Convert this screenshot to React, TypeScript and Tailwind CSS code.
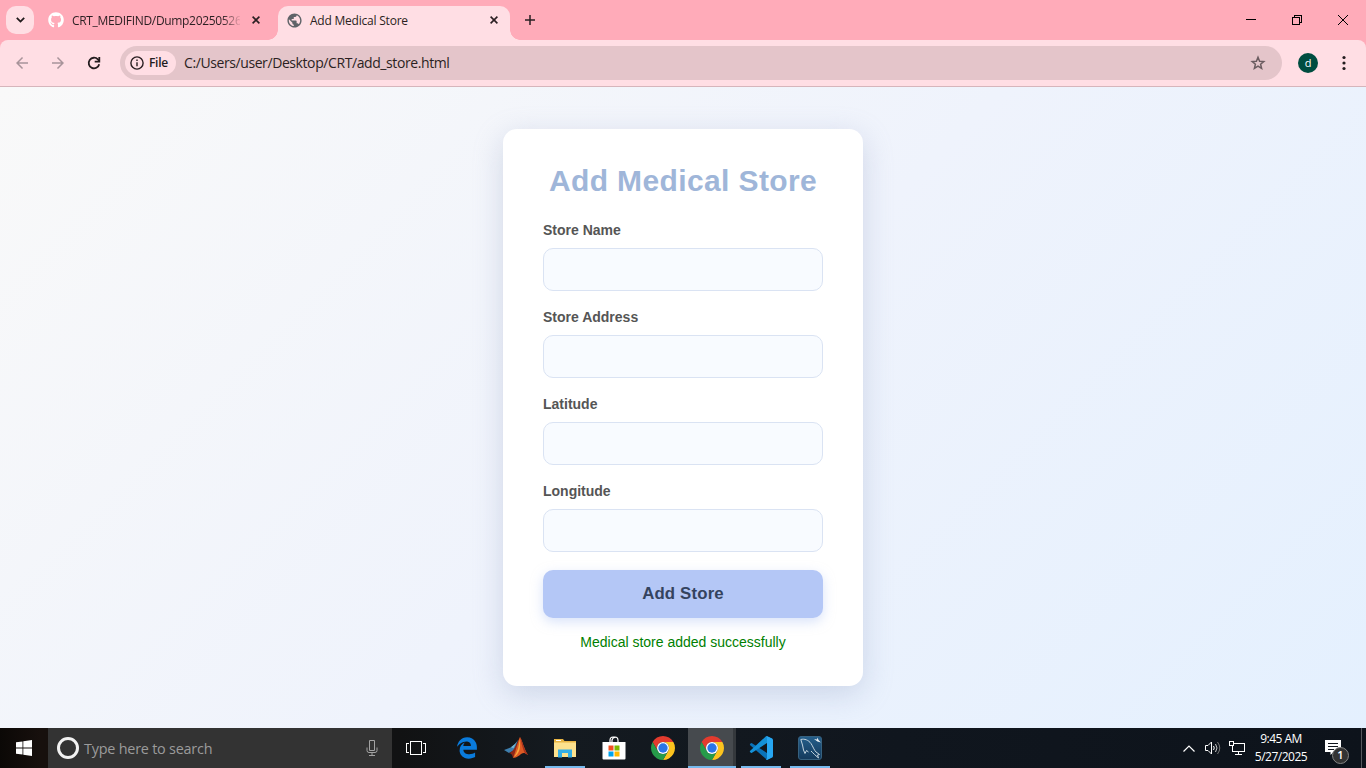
import React from "react";
import { FaGithub, FaEdgeLegacy } from "react-icons/fa6";
import { MdArrowBack, MdArrowForward, MdPublic } from "react-icons/md";

const FIELDS = ["Store Name", "Store Address", "Latitude", "Longitude"];

function Close({ className }: { className: string }) {
  return (
    <svg className={className} viewBox="0 0 8 8" fill="none" stroke="#2a1f22" strokeWidth="1.6">
      <path d="M.6.6 7.4 7.4M7.4.6.6 7.4" />
    </svg>
  );
}

function TabStrip() {
  return (
    <div className="flex h-10 bg-[#ffabb9]">
      <div className="mt-1.5 ml-1.5 flex h-7 w-7 items-center justify-center rounded-[10px] bg-[#ffdee4]">
        <svg className="h-[6px] w-[9px]" viewBox="0 0 9 6" fill="none" stroke="#1f1a1b" strokeWidth="1.8">
          <path d="M.8.9 4.5 4.6 8.2.9" />
        </svg>
      </div>
      <div className="flex h-10 w-[244px] items-center pl-[14px]">
        <FaGithub className="h-4 w-4 text-white" />
        <div className="ml-2 w-[168px] overflow-hidden pt-px text-[12px] tracking-[-0.32px] whitespace-nowrap text-[#2b1f22] [mask-image:linear-gradient(to_right,black_150px,transparent_170px)]">
          CRT_MEDIFIND/Dump20250526
        </div>
        <Close className="ml-3 h-2 w-2" />
      </div>
      <div className="relative mt-1.5 flex h-[34px] w-[232px] items-center rounded-t-[10px] bg-[#ffdee4] pb-1.5">
        <span className="absolute bottom-0 -left-[10px] h-[10px] w-[10px] bg-[radial-gradient(circle_at_0_0,transparent_9.5px,#ffdee4_10px)]" />
        <span className="absolute -right-[10px] bottom-0 h-[10px] w-[10px] bg-[radial-gradient(circle_at_100%_0,transparent_9.5px,#ffdee4_10px)]" />
        <MdPublic className="ml-2 h-[17px] w-[17px] text-[#5f6368]" />
        <div className="ml-[7px] w-[180px] pt-px text-[12px] tracking-[-0.22px] whitespace-nowrap text-[#2b1f22]">Add Medical Store</div>
        <Close className="h-2 w-2" />
      </div>
      <svg className="mt-[15px] ml-[15px] h-[10px] w-[10px]" viewBox="0 0 10 10" stroke="#2a1f22" strokeWidth="1.5">
        <path d="M5 0v10M0 5h10" />
      </svg>
      <div className="ml-auto flex h-10 items-center pr-[18px]">
        <svg className="h-[10px] w-[10px]" viewBox="0 0 10 10" stroke="#000" shapeRendering="crispEdges">
          <path d="M0 4.5h10" />
        </svg>
        <svg className="ml-9 h-[10px] w-[10px]" viewBox="0 0 10 10" fill="none" stroke="#000" shapeRendering="crispEdges">
          <path d="M.5 2.5h7v7h-7zM2.5 2.5v-2h7v7h-2" />
        </svg>
        <svg className="ml-9 h-[10px] w-[10px]" viewBox="0 0 10 10" stroke="#000">
          <path d="M0 0 10 10M10 0 0 10" />
        </svg>
      </div>
    </div>
  );
}

function Toolbar() {
  return (
    <div className="bg-[#ffabb9]">
      <div className="flex h-[47px] items-center rounded-t-[8px] border-b border-[#d6b5bb] bg-[#ffdee4]">
        <MdArrowBack className="ml-[13px] h-[18px] w-[18px] text-[#a8949a]" />
        <MdArrowForward className="ml-[18px] h-[18px] w-[18px] text-[#a8949a]" />
        <svg className="ml-[18px] h-[18px] w-[18px]" viewBox="0 0 18 18" fill="none" stroke="#231c1e" strokeWidth="1.8">
          <path d="M14.200 10.200A5.300 5.300 0 1 1 12.900 5.400L14.500 7" />
          <path d="M14.300 3v4.600H9.700" />
        </svg>
        <div className="ml-[17px] flex h-[34px] w-[1162px] items-center rounded-full bg-[#e4c5ca] pl-[5px]">
          <div className="flex h-6 w-[51px] items-center rounded-full bg-[#ffdee4] pl-[5px]">
            <svg className="h-[14px] w-[14px]" viewBox="0 0 14 14" fill="none" stroke="#2a1f22" strokeWidth="1.4">
              <circle cx="7" cy="7" r="6.1" />
              <path d="M7 6.2v4M7 3.6v1.5" />
            </svg>
            <span className="ml-[5px] text-[12px] font-semibold tracking-[-0.3px] text-[#231c1e]">File</span>
          </div>
          <span className="ml-2 pb-px text-[14px] tracking-[-0.41px] text-[#2b1f22]">C:/Users/user/Desktop/CRT/add_store.html</span>
          <svg className="mr-4 ml-auto h-4 w-4" viewBox="0 0 16 16" fill="none" stroke="#6b5c60" strokeWidth="1.500">
            <path d="M8 2.300 9.600 6.200 13.800 6.500 10.600 9.300 11.600 13.400 8 11.200 4.400 13.400 5.400 9.300 2.200 6.500 6.400 6.200z" />
          </svg>
        </div>
        <div className="ml-4 flex h-5 w-5 items-center justify-center rounded-full bg-[#004d40] text-[11px] text-white">d</div>
        <svg className="ml-6 h-4 w-4 -translate-x-[6px]" viewBox="0 0 16 16" fill="#231c1e">
          <circle cx="8" cy="2.5" r="1.6" />
          <circle cx="8" cy="8" r="1.6" />
          <circle cx="8" cy="13.5" r="1.6" />
        </svg>
      </div>
    </div>
  );
}

function StoreForm() {
  return (
    <main className="flex h-[641px] items-center justify-center bg-[linear-gradient(135deg,#f9f9f9_0%,#eff3fc_50%,#e4f0fe_100%)] font-['Liberation_Sans',Arial,sans-serif]">
      <form className="flex h-[557px] w-[360px] flex-col rounded-[14px] bg-white px-10 pt-[34px] shadow-[0_8px_30px_rgba(140,155,190,0.33)]">
        <h1 className="mb-[22px] text-center text-[30px] leading-[36px] font-bold tracking-[0.38px] whitespace-nowrap text-[#9fb6d9]">Add Medical Store</h1>
        {FIELDS.map((label) => (
          <div key={label} className="mb-4 flex h-[71px] flex-col">
            <label className="mb-[9px] text-[14px] leading-[18px] font-bold text-[#555]">{label}</label>
            <input className="h-[43px] w-full rounded-[10px] border border-[#dae3f3] bg-[#f8fbff]" />
          </div>
        ))}
        <button type="button" className="mt-px h-12 shrink-0 rounded-[10px] bg-[#b4c7f6] pb-px text-[16.8px] font-bold tracking-[0.17px] text-[#34435e] shadow-[0_4px_12px_rgba(180,199,246,0.5)]">
          Add Store
        </button>
        <p className="mt-4 text-center text-[14px] leading-[17px] text-[#008000]">Medical store added successfully</p>
      </form>
    </main>
  );
}

function Chrome() {
  return (
    <svg className="h-6 w-6" viewBox="0 0 24 24">
      <path fill="#e33b2e" d="M12 6H22.39A12 12 0 0 0 1.61 6L6.8 15A6 6 0 0 1 12 6z" />
      <path fill="#fcc31e" d="M17.2 15 12 24A12 12 0 0 0 22.39 6H12A6 6 0 0 1 17.2 15z" />
      <path fill="#269b49" d="M6.8 15 1.61 6A12 12 0 0 0 12 24L17.2 15A6 6 0 0 1 6.8 15z" />
      <circle cx="12" cy="12" r="6" fill="#fff" />
      <circle cx="12" cy="12" r="4.7" fill="#2a75e8" />
    </svg>
  );
}

function Matlab() {
  return (
    <svg className="h-[22px] w-6" viewBox="0 0 24 22">
      <path fill="#3e7fae" d="M0 13 7 10.3 11 7l3-4-3.5 10L5 16z" />
      <path fill="#76b7d2" d="m7 10.3 4-3.3 1.5-1.8-3 6z" />
      <path fill="#8e2717" d="M5 16c2.5-.8 4-2.2 5.500-5L16 0l-1 13-6 8c-.5-3-1.600-4.800-4-5z" />
      <path fill="#dd5a24" d="M9 21c2-4 4.500-15.500 7-21 2.600 4.500 4 12 8 18-3-2-4.500-2.500-6.500-1.200S13 21 9 21z" />
      <path fill="#f9a83d" d="M15.300 2c.1 7-1.800 13-5.300 18 5-3 7.500-9 5.300-18z" />
      <path fill="#a8321c" d="M16 0c2.600 4.500 4 12 8 18l-3-1.500C18 11 17.500 5 16 0z" />
    </svg>
  );
}

function Explorer() {
  return (
    <svg className="mt-px h-[19px] w-[22px]" viewBox="0 0 22 19">
      <path fill="#e9b544" d="M0 0h9l1.500 2H22v3H0z" />
      <path fill="#fff" d="M2 1h5v1H2z" />
      <path fill="#fde18d" d="M0 3.500h22V18H0z" />
      <path fill="#35aee5" d="M4 10.500h14V18.500h-4V14H8v4.500H4z" />
    </svg>
  );
}

function StoreIcon() {
  return (
    <svg className="h-6 w-6" viewBox="0 0 24 24">
      <path d="M8 7V4.500Q8 1 11 1h2q3 0 3 3.500V7M10 7V4Q11 1 13.500 1.500" fill="none" stroke="#fff" strokeWidth="1.200" />
      <path fill="#fff" d="M.5 6h23v16.500q0 1-1 1h-21q-1 0-1-1z" />
      <path fill="#f25022" d="M6.500 9.500h5v5h-5z" />
      <path fill="#7fba00" d="M12.500 9.500h5v5h-5z" />
      <path fill="#00a4ef" d="M6.500 15.500h5v5h-5z" />
      <path fill="#ffb900" d="M12.500 15.500h5v5h-5z" />
    </svg>
  );
}

function Code() {
  return (
    <svg className="h-6 w-6" viewBox="0 0 24 24">
      <path fill="#0a72b8" d="M1.300 7.700a1 1 0 0 0-.1 1.500L18 23.800l5.500-2.600L18 16.900 3 7.300q-.8-.5-1.700.4z" />
      <path fill="#1491d8" d="M1.300 16.300a1 1 0 0 1-.1-1.500L17 .2l6.500 2.600L18 7.100 3 16.700q-.8.5-1.700-.4z" />
      <path fill="#27a7f2" d="M17 .2q1 .8 1 1.800v20q0 1-1 1.800.7.4 1.500 0l4.500-2.200q1-.5 1-1.500V3.900q0-1-1-1.500L18.500.2q-.8-.4-1.500 0z" />
    </svg>
  );
}

function Dolphin() {
  return (
    <svg className="h-6 w-6" viewBox="0 0 24 24">
      <defs>
        <linearGradient id="tile" x1="0" y1="0" x2="0" y2="1">
          <stop offset="0" stopColor="#255f8b" />
          <stop offset="1" stopColor="#143a5c" />
        </linearGradient>
      </defs>
      <rect x=".5" y=".5" width="23" height="23" rx="2.500" fill="url(#tile)" stroke="#36617f" />
      <path
        fill="none"
        stroke="#c3d3de"
        d="M8.500 14.500 7 17.500 5.500 14 4.500 9 2.800 3.500C6.500 2.500 10.500 4 13 7.500c2 3 3 6.500 5 8.500l3.500 2.500-2 .5 1 3-4-3.500c-1.500-1-2-2.500-3.500-3.500M8.500 14.500l2 1.500"
      />
      <path fill="#eef3f6" d="m16 3 3 .5.500-2 1 2.500 2.500 2.500-3.500-1z" />
    </svg>
  );
}

const APPS = [
  { name: "edge", icon: <FaEdgeLegacy className="h-[22px] w-[22px] text-[#0a7bdc]" />, open: false },
  { name: "matlab", icon: <Matlab />, open: false },
  { name: "explorer", icon: <Explorer />, open: true },
  { name: "store", icon: <StoreIcon />, open: false },
  { name: "chrome", icon: <Chrome />, open: false },
];

const LATE_APPS = [
  { name: "code", icon: <Code /> },
  { name: "workbench", icon: <Dolphin /> },
];

function Taskbar() {
  return (
    <footer className="flex h-10 bg-[linear-gradient(90deg,#0b0806_0px,#17100d_40px,#111213_400px,#141a20_560px,#10161e_900px,#0d131b_1366px)]">
      <div className="flex w-12 items-center justify-center">
        <svg className="h-4 w-4" viewBox="0 0 16 16" fill="#fff">
          <path d="M0 2.300 6.500 1.400V7.600H0zM7.300 1.300 16 0v7.600H7.300zM0 8.400h6.500v6.200L0 13.700zM7.300 8.400H16V16l-8.700-1.300z" />
        </svg>
      </div>
      <div className="flex w-[344px] items-center bg-[#333]">
        <div className="ml-[9px] h-[22px] w-[22px] rounded-full border-[3px] border-[#f2f2f2]" />
        <span className="ml-[5px] pt-0.5 text-[14.4px] tracking-[-0.22px] text-[#9b9b9b]">Type here to search</span>
        <svg className="mr-[14px] ml-auto h-4 w-3" viewBox="0 0 12 16" fill="none" stroke="#a3a3a3">
          <path d="M3.500.5h5v10h-5zM1 7.500v3q0 2 2 2h6q2 0 2-2v-3M6 12.500v3M3 15.500h6" />
        </svg>
      </div>
      <div className="flex w-[50px] items-center pl-[14px]">
        <svg className="h-[14px] w-5" viewBox="0 0 20 14" fill="none" stroke="#fff" shapeRendering="crispEdges">
          <path d="M4.500.5h11v13h-11zM3 2.500H.5v9H3M17 2.500h2.500v9H17" />
        </svg>
      </div>
      {APPS.map((app) => (
        <div key={app.name} className="flex w-[49px] flex-col items-center">
          <div className="flex h-[38px] items-center pt-0.5">{app.icon}</div>
          {app.open && <div className="h-0.5 w-10 bg-[#76b9ed]" />}
        </div>
      ))}
      <div className="ml-px flex w-12 flex-col border-r-[3px] border-[#34383c] bg-[#464a4e]">
        <div className="flex h-[38px] items-center pt-0.5 pl-3">
          <Chrome />
        </div>
        <div className="h-0.5 w-12 shrink-0 bg-[#76b9ed]" />
      </div>
      {LATE_APPS.map((app) => (
        <div key={app.name} className="flex w-[49px] flex-col items-center">
          <div className="flex h-[38px] items-center pt-0.5">{app.icon}</div>
          <div className="h-0.5 w-10 bg-[#76b9ed]" />
        </div>
      ))}
      <div className="ml-auto flex items-center text-white">
        <svg className="h-[7px] w-3" viewBox="0 0 12 7" fill="none" stroke="#fff" strokeWidth="1.200">
          <path d="M.5 6.500 6 1l5.500 5.500" />
        </svg>
        <svg className="ml-[10px] h-[14px] w-4" viewBox="0 0 16 14" fill="none" stroke="#fff">
          <path d="M.5 4.500h2.500L6.500 1v12L3 9.500H.5zM8.500 5q1.500 2 0 4" />
          <path d="M10.500 3q3 4 0 8" stroke="#ccc" />
          <path d="M12.500 1q4.500 6 0 12" stroke="#777" />
        </svg>
        <svg className="ml-2 h-[14px] w-4" viewBox="0 0 16 14" fill="none" stroke="#fff" shapeRendering="crispEdges">
          <path d="M5 2.500h10.500v8H3.500V5M.5.500h4v4h-4zM9.500 10.500v3M6 13.500h7" />
        </svg>
        <div className="ml-2 w-[56px] text-center text-[12px] leading-[18px] tracking-[-0.5px] whitespace-nowrap">
          <div>9:45 AM</div>
          <div>5/27/2025</div>
        </div>
        <div className="relative ml-4 h-4 w-4">
          <svg className="h-4 w-4" viewBox="0 0 16 16">
            <path fill="#fff" d="M0 0h16v12H8.500L5.500 15v-3H0z" />
            <path stroke="#11161d" d="M3 3.500h10M3 6.500h10M3 9.500h6" />
          </svg>
          <span className="absolute top-[7px] left-[7px] flex h-[17px] w-[17px] items-center justify-center rounded-full border border-[#858585] bg-[#333] text-[11px] font-semibold">1</span>
        </div>
        <div className="ml-5 h-10 w-[5px] border-l border-[#55595e]" />
      </div>
    </footer>
  );
}

export default function App() {
  return (
    <div className="flex h-[768px] w-[1366px] flex-col overflow-hidden font-['Open_Sans','Noto_Sans',sans-serif]">
      <TabStrip />
      <Toolbar />
      <StoreForm />
      <Taskbar />
    </div>
  );
}
